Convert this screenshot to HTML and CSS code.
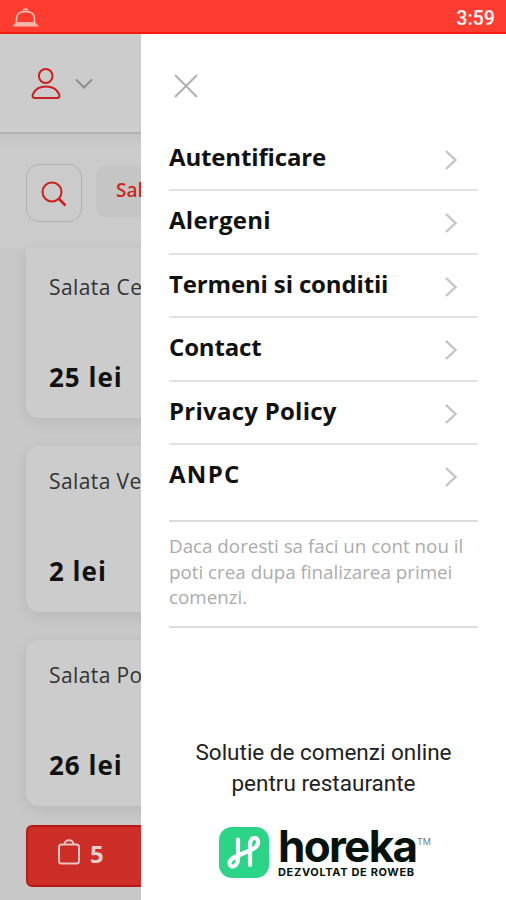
FILE: index.html
```html
<!DOCTYPE html>
<html lang="ro">
<head>
    <meta charset="UTF-8">
    <meta name="viewport" content="width=device-width, initial-scale=1.0">
    <title>Horeka</title>
    <link rel="stylesheet" href="styles.css">
</head>
<body>
    <div class="status-bar">
        <svg class="bell" width="28" height="20" viewBox="0 0 28 20" fill="none" stroke="#ffc5bf" stroke-width="1.5">
            <path d="M4.5 14V10.500C4.500 6 7.500 3.500 13.500 3.500S22.500 6 22.500 10.500V14"/>
            <path d="M11.500 2.500C11.500 .5 15.500 .5 15.500 2.500"/>
            <path d="M4 14H23L27 18.500H.5Z" fill="#ffb3ab" stroke="none"/>
        </svg>
        <span class="clock">3:59</span>
    </div>
    <div class="screen">
        <div class="shop">
            <div class="top-bar">
                <svg width="32" height="34" viewBox="0 0 32 34" fill="none" stroke="#c9211d" stroke-width="2">
                    <ellipse cx="15.700" cy="9" rx="6.800" ry="7"/>
                    <path d="M5 31H27C29.500 31 30 29 29 27C27 22.500 22 19.500 16 19.500S5 22.500 3 27C2 29 2.500 31 5 31Z"/>
                </svg>
                <svg width="18" height="12" viewBox="0 0 18 12" fill="none" stroke="#8e8e8e" stroke-width="2">
                    <path d="M1 1.500L9 9.500L17 1.500"/>
                </svg>
            </div>
            <div class="filters">
                <div class="search">
                    <svg width="26" height="26" viewBox="0 0 26 26" fill="none" stroke="#c9211d" stroke-width="2">
                        <circle cx="11" cy="11" r="9.500"/>
                        <path d="M18 18L24.500 24.500" stroke-width="2.600"/>
                    </svg>
                </div>
                <div class="category">Salate</div>
            </div>
            <div class="products">
                <div class="product">
                    <div class="name">Salata Cezar</div>
                    <div class="price">25 lei</div>
                </div>
                <div class="product">
                    <div class="name">Salata Verde</div>
                    <div class="price">2 lei</div>
                </div>
                <div class="product">
                    <div class="name">Salata Pomodoro</div>
                    <div class="price">26 lei</div>
                </div>
            </div>
            <div class="cart">
                <svg width="22" height="26" viewBox="0 0 22 26" fill="none" stroke="#e8c4c2" stroke-width="2">
                    <rect x="1" y="5.500" width="20" height="19" rx="2.500"/>
                    <path d="M6.500 5.500C6.500 -.2 15.500 -.2 15.500 5.500"/>
                </svg>
                <span>5</span>
            </div>
        </div>
        <div class="menu">
            <svg class="close" width="24" height="24" viewBox="0 0 24 24" fill="none" stroke="#b0b0b0" stroke-width="2">
                <path d="M1 1L23 23M23 1L1 23"/>
            </svg>
            <div class="links">
                <div class="link">
                    <span>Autentificare</span>
                    <svg width="14" height="22" viewBox="0 0 14 22"><path d="M2 2L11.500 11L2 20"/></svg>
                </div>
                <div class="link wide">
                    <span>Alergeni</span>
                    <svg width="14" height="22" viewBox="0 0 14 22"><path d="M2 2L11.500 11L2 20"/></svg>
                </div>
                <div class="link">
                    <span>Termeni si conditii</span>
                    <svg width="14" height="22" viewBox="0 0 14 22"><path d="M2 2L11.500 11L2 20"/></svg>
                </div>
                <div class="link">
                    <span>Contact</span>
                    <svg width="14" height="22" viewBox="0 0 14 22"><path d="M2 2L11.500 11L2 20"/></svg>
                </div>
                <div class="link wide">
                    <span>Privacy Policy</span>
                    <svg width="14" height="22" viewBox="0 0 14 22"><path d="M2 2L11.500 11L2 20"/></svg>
                </div>
                <div class="link caps">
                    <span>ANPC</span>
                    <svg width="14" height="22" viewBox="0 0 14 22"><path d="M2 2L11.500 11L2 20"/></svg>
                </div>
            </div>
            <div class="note">Daca doresti sa faci un cont nou il<br>poti crea dupa finalizarea primei<br>comenzi.</div>
            <div class="slogan">Solutie de comenzi online<br>pentru restaurante</div>
            <div class="brand">
                <svg width="50" height="51" viewBox="0 0 50 51">
                    <rect width="50" height="51" rx="13" fill="#2bd486"/>
                    <path d="M19 12.500V31C19 40 11 42 10.500 36.500C10 31.500 17 29.500 25 26C34 22 40 20 39 14C37 8 31 11 31 18V38" fill="none" stroke="#fff" stroke-width="4.200" stroke-linecap="round" stroke-linejoin="round"/>
                </svg>
                <div class="brand-text">
                    <div class="brand-name">horeka</div>
                    <div class="brand-sub">DEZVOLTAT DE ROWEB</div>
                </div>
                <span class="tm">TM</span>
            </div>
        </div>
    </div>
</body>
</html>
```
FILE: styles.css
```css
* {
    box-sizing: border-box;
}

body {
    margin: 0;
    font-family: "Open Sans", "Noto Sans", sans-serif;
    background-color: #fff;
    color: #111;
    width: 506px;
    height: 900px;
    overflow: hidden;
}

svg {
    display: block;
    flex: none;
}

.status-bar {
    display: flex;
    justify-content: space-between;
    height: 34px;
    padding: 8px 11px 0 12px;
    background-color: #ff3c30;
    border-bottom: 2px solid #f51b13;
}

.clock {
    font-family: Roboto, sans-serif;
    font-size: 19.500px;
    font-weight: 600;
    line-height: 21px;
    color: #fff0ee;
}

.screen {
    display: flex;
    height: 866px;
}

.shop {
    flex: none;
    width: 141px;
    overflow: hidden;
    white-space: nowrap;
    background-color: #c8c8c8;
}

.top-bar {
    display: flex;
    gap: 13px;
    height: 100px;
    padding: 33px 0 0 30px;
    background-color: #ccc;
    border-bottom: 2px solid #b2b2b2;
}

.top-bar svg:last-child {
    margin-top: 11px;
}

.filters {
    display: flex;
    gap: 14px;
    height: 114px;
    padding: 30px 0 0 26px;
    background: linear-gradient(#c5c5c5, #cbcbcb 14px);
}

.search {
    flex: none;
    width: 56px;
    height: 58px;
    padding: 16px 0 0 14px;
    border: 1.500px solid #b2b2b2;
    border-radius: 13px;
}

.category {
    flex: none;
    width: 120px;
    height: 51px;
    margin-top: 2px;
    padding-left: 20px;
    border-radius: 10px;
    background-color: #c5c5c5;
    color: #cd2622;
    font-size: 19px;
    font-weight: 600;
    line-height: 48px;
}

.products {
    display: flex;
    flex-direction: column;
    gap: 28px;
    height: 577px;
}

.product {
    flex: none;
    width: 300px;
    height: 166px;
    margin-left: 26px;
    padding: 21px 0 0 23px;
    border-radius: 13px;
    background-color: #ccc;
    box-shadow: 0 4px 14px rgba(0, 0, 0, 0.08);
}

.product:first-child {
    height: 170px;
    padding-top: 25px;
    border-radius: 0 0 13px 13px;
}

.name {
    font-size: 21px;
    line-height: 28px;
    letter-spacing: 0.4px;
    color: #333;
}

.price {
    margin-top: 58px;
    font-size: 26px;
    font-weight: 700;
    line-height: 36px;
    letter-spacing: 1px;
}

.cart {
    display: flex;
    gap: 10px;
    width: 300px;
    height: 62px;
    margin-left: 26px;
    padding: 12px 0 0 30px;
    border: 2px solid #bd1714;
    border-radius: 6px;
    background-color: #cd2d27;
    color: #e8d0ce;
    font-size: 24px;
    font-weight: 700;
    line-height: 30px;
}

.menu {
    width: 365px;
    padding: 40px 28px 0;
    background-color: #fff;
}

.close {
    margin-left: 5px;
}

.links {
    height: 394px;
    margin-top: 30px;
    border-bottom: 2px solid #dcdcdc;
}

.link {
    display: flex;
    justify-content: space-between;
    height: 63.400px;
    padding: 12px 20px 0 0;
    border-bottom: 2px solid #e2e2e2;
    font-size: 24px;
    font-weight: 700;
    line-height: 34px;
    letter-spacing: -0.150px;
    white-space: nowrap;
}

.link.wide {
    letter-spacing: 0.250px;
}

.link.caps {
    letter-spacing: 1.300px;
}

.link:last-child {
    border-bottom: none;
}

.link svg {
    margin-top: 9px;
    fill: none;
    stroke: #c4c4c4;
    stroke-width: 2.400;
}

.note {
    height: 106px;
    padding-top: 12px;
    border-bottom: 2px solid #dcdcdc;
    color: #acacac;
    font-size: 18.800px;
    line-height: 25.500px;
    white-space: nowrap;
}

.slogan {
    margin-top: 109px;
    color: #222;
    font-family: Roboto, sans-serif;
    font-size: 22.500px;
    line-height: 31px;
    text-align: center;
    white-space: nowrap;
}

.brand {
    display: flex;
    margin: 28px 0 0 50px;
}

.brand-text {
    width: 139px;
    margin-left: 9px;
    color: #06130c;
    font-family: Inter, sans-serif;
    white-space: nowrap;
}

.brand-name {
    font-size: 44px;
    font-weight: 700;
    letter-spacing: -1.700px;
    line-height: 39px;
}

.brand-sub {
    font-size: 11px;
    font-weight: 700;
    letter-spacing: 0.650px;
    line-height: 12px;
}

.tm {
    margin-top: 9px;
    color: #777;
    font-family: Inter, sans-serif;
    font-size: 9px;
}
```
